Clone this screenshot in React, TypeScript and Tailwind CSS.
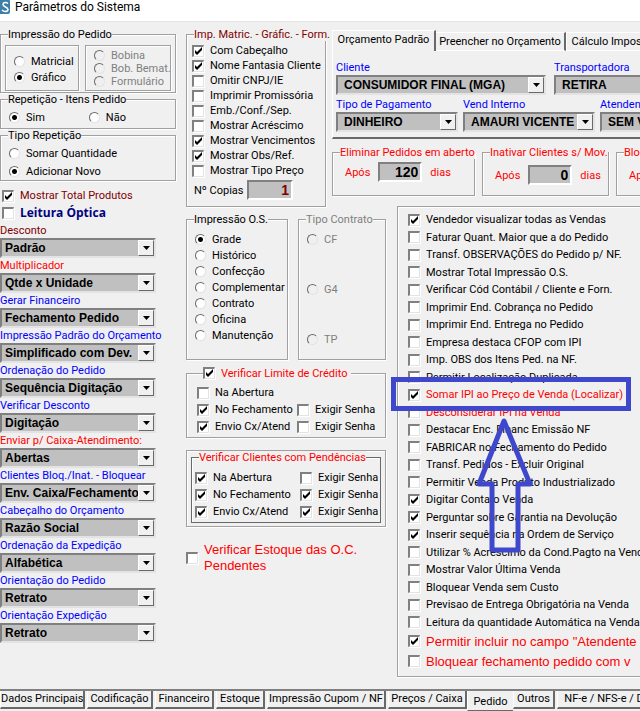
import type { ReactNode } from 'react';

const GROUP =
  'min-w-0 border border-[#a0a0a0] shadow-[1px_1px_0_#fff,inset_1px_1px_0_#fff]';

function Group({
  title,
  className = '',
  legendClass = '',
  children,
}: {
  title: ReactNode;
  className?: string;
  legendClass?: string;
  children: ReactNode;
}) {
  return (
    <fieldset className={`${GROUP} ${className}`}>
      <legend className={`ml-[7px] h-[13px] bg-[#f0f0f0] leading-[13px] ${legendClass}`}>{title}</legend>
      {children}
    </fieldset>
  );
}

function Check({
  label,
  checked = false,
  className = '',
}: {
  label: ReactNode;
  checked?: boolean;
  className?: string;
}) {
  return (
    <label className={`flex items-center gap-1.5 ${className}`}>
      <span className="grid shrink-0">
        <input
          type="checkbox"
          defaultChecked={checked}
          className="peer col-start-1 row-start-1 size-3 appearance-none border-t-2 border-r border-b border-l-2 border-t-[#808080] border-r-[#e3e3e3] border-b-[#e3e3e3] border-l-[#808080] bg-white shadow-[1px_1px_0_#fff]"
        />
        <svg
          viewBox="0 0 12 12"
          className="pointer-events-none col-start-1 row-start-1 hidden size-3 peer-checked:block"
          aria-hidden="true"
        >
          <path d="M3 5v3l2 2 5-5V2L5 7z" fill="#000" />
        </svg>
      </span>
      <span>{label}</span>
    </label>
  );
}

function Radio({
  label,
  name,
  checked = false,
  disabled = false,
  className = '',
}: {
  label: string;
  name: string;
  checked?: boolean;
  disabled?: boolean;
  className?: string;
}) {
  return (
    <label className={`flex items-center gap-1.5 ${disabled ? 'text-[#808080]' : ''} ${className}`}>
      <input
        type="radio"
        name={name}
        defaultChecked={checked}
        disabled={disabled}
        className="size-[11px] shrink-0 appearance-none rounded-full border border-t-[#696969] border-r-[#e3e3e3] border-b-[#e3e3e3] border-l-[#696969] bg-white checked:bg-[radial-gradient(circle,#000_0_2px,#fff_3px)] disabled:bg-[#f0f0f0]"
      />
      <span>{label}</span>
    </label>
  );
}

function Combo({
  label,
  value,
  color = 'text-[#0000ff]',
  className = '',
  inset = 'pl-[3px]',
}: {
  label: string;
  value: string;
  color?: string;
  className?: string;
  inset?: string;
}) {
  return (
    <label className={`block shrink-0 ${className}`}>
      <span className={`block h-[15px] leading-[15px] ${color}`}>{label}</span>
      <span className="relative block">
        <select
          className={`block h-5 w-full appearance-none overflow-hidden rounded-none border-2 border-t-[#808080] border-r-[#e3e3e3] border-b-[#e3e3e3] border-l-[#808080] bg-[#c0c0c0] pr-4 font-['Liberation_Sans',Arial,sans-serif] text-xs font-bold text-black ${inset}`}
        >
          <option>{value}</option>
        </select>
        <span className="pointer-events-none absolute top-[2px] right-[2px] flex h-4 w-4 items-center justify-center border border-t-white border-r-[#696969] border-b-[#696969] border-l-white bg-[#f0f0f0]">
          <svg viewBox="0 0 7 4" className="h-1 w-[7px]" aria-hidden="true">
            <path d="M0 0h7L3.5 4z" fill="#000" />
          </svg>
        </span>
      </span>
    </label>
  );
}

function NumberBox({ value, label, className = '' }: { value: string; label: string; className?: string }) {
  return (
    <input
      aria-label={label}
      defaultValue={value}
      className={`h-5 border-2 border-t-[#808080] border-r-white border-b-white border-l-[#808080] bg-[#c0c0c0] pr-[2px] text-right font-['Liberation_Sans',Arial,sans-serif] text-sm font-bold ${className}`}
    />
  );
}

const combos = [
  { label: 'Desconto', value: 'Padrão', color: 'text-[#800000]' },
  { label: 'Multiplicador', value: 'Qtde x Unidade', color: 'text-[#ff0000]' },
  { label: 'Gerar Financeiro', value: 'Fechamento Pedido' },
  { label: 'Impressão Padrão do Orçamento', value: 'Simplificado com Dev.' },
  { label: 'Ordenação do Pedido', value: 'Sequência Digitação' },
  { label: 'Verificar Desconto', value: 'Digitação' },
  { label: 'Enviar p/ Caixa-Atendimento:', value: 'Abertas', color: 'text-[#ff0000]' },
  { label: 'Clientes Bloq./Inat. - Bloquear', value: 'Env. Caixa/Fechamento' },
  { label: 'Cabeçalho do Orçamento', value: 'Razão Social' },
  { label: 'Ordenação da Expedição', value: 'Alfabética' },
  { label: 'Orientação do Pedido', value: 'Retrato' },
  { label: 'Orientação Expedição', value: 'Retrato' },
];

const printOptions: [string, boolean][] = [
  ['Com Cabeçalho', true],
  ['Nome Fantasia Cliente', true],
  ['Omitir CNPJ/IE', false],
  ['Imprimir Promissória', false],
  ['Emb./Conf./Sep.', false],
  ['Mostrar Acréscimo', false],
  ['Mostrar Vencimentos', true],
  ['Mostrar Obs/Ref.', true],
  ['Mostrar Tipo Preço', false],
];

const osLayouts = ['Grade', 'Histórico', 'Confecção', 'Complementar', 'Contrato', 'Oficina', 'Manutenção'];

const orderOptions: { label: string; checked?: boolean; red?: boolean }[] = [
  { label: 'Vendedor visualizar todas as Vendas', checked: true },
  { label: 'Faturar Quant. Maior que a do Pedido' },
  { label: 'Transf. OBSERVAÇÕES do Pedido p/ NF.' },
  { label: 'Mostrar Total Impressão O.S.' },
  { label: 'Verificar Cód Contábil / Cliente e Forn.' },
  { label: 'Imprimir End. Cobrança no Pedido' },
  { label: 'Imprimir End. Entrega no Pedido' },
  { label: 'Empresa destaca CFOP com IPI' },
  { label: 'Imp. OBS dos Itens Ped. na NF.' },
  { label: 'Permitir Localização Duplicada' },
  { label: 'Somar IPI ao Preço de Venda (Localizar)', checked: true, red: true },
  { label: 'Desconsiderar IPI na Venda', red: true },
  { label: 'Destacar Enc. Financ Emissão NF' },
  { label: 'FABRICAR no Fechamento do Pedido' },
  { label: 'Transf. Pedidos - Excluir Original' },
  { label: 'Permitir Venda Produto Industrializado' },
  { label: 'Digitar Contato Venda', checked: true },
  { label: 'Perguntar sobre Garantia na Devolução', checked: true },
  { label: 'Inserir sequência na Ordem de Serviço', checked: true },
  { label: 'Utilizar % Acrescimo da Cond.Pagto na Venda' },
  { label: 'Mostrar Valor Última Venda' },
  { label: 'Bloquear Venda sem Custo' },
  { label: 'Previsao de Entrega Obrigatória na Venda' },
  { label: 'Leitura da quantidade Automática na Venda' },
];

const TAB =
  'h-[18px] shrink-0 border-r-2 border-b-2 border-l border-r-[#696969] border-b-[#696969] border-l-white text-center leading-4';

function LeftColumn() {
  return (
    <div className="w-[176px] shrink-0">
      <Group title="Impressão do Pedido" className="h-[65px]">
        <div className="flex gap-1.5 px-1 pt-1">
          <div className={`flex h-[46px] w-[74px] flex-col justify-center pt-[3px] pl-2 ${GROUP}`}>
            <Radio name="impressao" label="Matricial" className="h-4" />
            <Radio name="impressao" label="Gráfico" checked className="h-4" />
          </div>
          <div className={`flex h-[46px] flex-1 flex-col justify-center pl-2 ${GROUP}`}>
            <Radio name="formato" label="Bobina" disabled className="h-[13px]" />
            <Radio name="formato" label="Bob. Bemat." disabled className="h-[13px]" />
            <Radio name="formato" label="Formulário" disabled className="h-[13px]" />
          </div>
        </div>
      </Group>
      <Group title="Repetição - Itens Pedido" className="h-9">
        <div className="flex h-[22px] items-center gap-[44px] pl-2">
          <Radio name="repeticao" label="Sim" checked />
          <Radio name="repeticao" label="Não" />
        </div>
      </Group>
      <Group title="Tipo Repetição" className="h-[52px]">
        <div className="pt-[2px] pl-2">
          <Radio name="tipo" label="Somar Quantidade" className="h-[18px]" />
          <Radio name="tipo" label="Adicionar Novo" checked className="h-[18px]" />
        </div>
      </Group>
      <div className="mt-1.5 pl-[2px]">
        <Check label="Mostrar Total Produtos" checked className="h-[17px] text-[#800000]" />
        <Check
          label="Leitura Óptica"
          className="h-[17px] font-['Open_Sans',sans-serif] text-xs font-bold text-[#000080]"
        />
      </div>
      <div className="mt-[2px] w-[156px]">
        {combos.map((c) => (
          <Combo key={c.label} {...c} />
        ))}
      </div>
    </div>
  );
}

function PrintGroup() {
  return (
    <Group
      title="Imp. Matric. - Gráfic. - Form."
      className="h-[179px] w-[140px] shrink-0"
      legendClass="text-[#800000]"
    >
      <div className="pt-[2px] pl-[5px]">
        {printOptions.map(([label, on]) => (
          <Check key={label} label={label} checked={on} className="h-[15px]" />
        ))}
        <div className="flex h-6 items-center justify-between pr-8 pl-[2px]">
          <span>Nº Copias</span>
          <NumberBox label="Nº Copias" value="1" className="w-[46px] text-[#800000]" />
        </div>
      </div>
    </Group>
  );
}

function DaysGroup({ title, value, className, rowClass }: { title: string; value: string; className: string; rowClass: string }) {
  return (
    <Group title={title} className={`h-[50px] shrink-0 text-[#ff0000] ${className}`}>
      <div className={`flex items-center gap-2 pl-3 ${rowClass}`}>
        <span>Após</span>
        <NumberBox label={title} value={value} className="w-11 text-black" />
        <span>dias</span>
      </div>
    </Group>
  );
}

function DefaultsArea() {
  return (
    <div className="min-w-0 flex-1 overflow-hidden pt-[2px]">
      <div className="flex items-end">
        <button className="h-[21px] w-[104px] shrink-0 border-t border-r-2 border-l border-t-white border-r-[#696969] border-l-white pb-1">
          Orçamento Padrão
        </button>
        <button className="h-[19px] w-[130px] shrink-0 border-t border-r-2 border-b border-t-white border-r-[#696969] border-b-white">
          Preencher no Orçamento
        </button>
        <button className="h-[19px] w-[90px] shrink-0 border-t border-b border-l border-t-white border-b-white border-l-white">
          Cálculo Imposto
        </button>
      </div>
      <div className="h-[88px] border-b-2 border-l border-b-[#696969] border-l-white pt-[9px] pl-[3px]">
        <div className="flex gap-2">
          <Combo label="Cliente" value="CONSUMIDOR FINAL (MGA)" className="w-[210px]" inset="pl-[6px]" />
          <Combo label="Transportadora" value="RETIRA" className="w-[210px]" inset="pl-[6px]" />
        </div>
        <div className="mt-[2px] flex gap-[5px]">
          <Combo label="Tipo de Pagamento" value="DINHEIRO" className="w-[122px]" inset="pl-[6px]" />
          <Combo label="Vend Interno" value="AMAURI VICENTE" className="w-[132px]" inset="pl-[6px]" />
          <Combo label="Atendente" value="SEM V" className="w-[132px]" inset="pl-[6px]" />
        </div>
      </div>
      <div className="mt-[7px] flex gap-[7px]">
        <DaysGroup title="Eliminar Pedidos em aberto" value="120" className="w-[143px]" rowClass="pt-[3px]" />
        <DaysGroup title="Inativar Clientes s/ Mov." value="0" className="w-[127px]" rowClass="pt-[6px]" />
        <DaysGroup title="Bloquear" value="0" className="w-[127px]" rowClass="pt-[6px]" />
      </div>
    </div>
  );
}

function MiddleColumn() {
  return (
    <div className="w-[200px] shrink-0 pt-[7px]">
      <div className="flex gap-2.5">
        <Group title="Impressão O.S." className="h-[147px] w-[102px]">
          <div className="pt-[5px] pl-2">
            {osLayouts.map((l, i) => (
              <Radio key={l} name="os" label={l} checked={i === 0} className="h-4" />
            ))}
          </div>
        </Group>
        <Group title="Tipo Contrato" className="h-[147px] flex-1" legendClass="text-[#808080]">
          <div className="flex h-[121px] flex-col justify-between pt-[5px] pl-2">
            <Radio name="contrato" label="CF" disabled className="h-4" />
            <Radio name="contrato" label="G4" disabled className="h-4" />
            <Radio name="contrato" label="TP" disabled className="h-4" />
          </div>
        </Group>
      </div>
      <fieldset className={`mt-1.5 h-[72px] ${GROUP}`}>
        <legend className="ml-4 bg-[#f0f0f0] pr-1">
          <Check label="Verificar Limite de Crédito" checked className="h-[14px] text-[#ff0000]" />
        </legend>
        <div className="grid grid-cols-[100px_1fr] pt-[4px] pl-2.5">
          <Check label="Na Abertura" className="col-span-2 h-[17px]" />
          <Check label="No Fechamento" checked className="h-[17px]" />
          <Check label="Exigir Senha" className="h-[17px]" />
          <Check label="Envio Cx/Atend" checked className="h-[17px]" />
          <Check label="Exigir Senha" className="h-[17px]" />
        </div>
      </fieldset>
      <div className={`mt-3 h-[77px] px-1 ${GROUP}`}>
        <fieldset className="h-[72px] border border-[#696969] shadow-[inset_1px_1px_0_#fff]">
          <legend className="ml-[7px] h-[13px] bg-[#f0f0f0] leading-[13px] text-[#ff0000]">
            Verificar Clientes com Pendências
          </legend>
          <div className="grid grid-cols-[105px_1fr] pt-[5px] pl-[3px]">
            <Check label="Na Abertura" checked className="h-[17px]" />
            <Check label="Exigir Senha" className="h-[17px]" />
            <Check label="No Fechamento" checked className="h-[17px]" />
            <Check label="Exigir Senha" checked className="h-[17px]" />
            <Check label="Envio Cx/Atend" checked className="h-[17px]" />
            <Check label="Exigir Senha" checked className="h-[17px]" />
          </div>
        </fieldset>
      </div>
      <Check
        className="mt-[15px] font-['Liberation_Sans',Arial,sans-serif] text-[13px] leading-4 text-[#ff0000]"
        label={
          <>
            Verificar Estoque das O.C.
            <br />
            Pendentes
          </>
        }
      />
    </div>
  );
}

function OrderOptions() {
  return (
    <div className="relative h-[471px] min-w-0 flex-1 border-t border-b border-l border-[#a0a0a0] pt-1 pl-2.5 shadow-[0_1px_0_#fff,inset_1px_1px_0_#fff]">
      <div>
        {orderOptions.map((o) => (
          <Check
            key={o.label}
            label={o.label}
            checked={o.checked}
            className={`odd:h-[17px] even:h-[18px] ${o.red ? 'text-[#ff0000]' : ''}`}
          />
        ))}
      </div>
      <div className="font-['Liberation_Sans',Arial,sans-serif] text-[13px] text-[#ff0000]">
        <Check label={'Permitir incluir no campo "Atendente'} checked className="h-5" />
        <Check label="Bloquear fechamento pedido com v" className="h-5" />
      </div>
      <svg
        viewBox="0 0 242 178"
        className="pointer-events-none absolute top-[170px] -left-[7px] h-[178px] w-[242px]"
        fill="none"
        stroke="#3f48cc"
        aria-hidden="true"
      >
        <rect x="2.500" y="2.500" width="235" height="29" strokeWidth="5" />
        <path d="M113 44L88 107h13v66h26v-66h12z" strokeWidth="5" strokeLinejoin="round" />
      </svg>
    </div>
  );
}

function BottomTabs() {
  return (
    <nav className="mt-3 flex items-start overflow-hidden border-t-2 border-[#808080]">
      <button className={`${TAB} w-[85px]`}>Dados Principais</button>
      <button className={`${TAB} ml-[2px] w-[66px]`}>Codificação</button>
      <button className={`${TAB} ml-[2px] w-[59px]`}>Financeiro</button>
      <button className={`${TAB} ml-[2px] w-[49px]`}>Estoque</button>
      <button className={`${TAB} ml-[2px] w-[119px]`}>Impressão Cupom / NF</button>
      <button className={`${TAB} ml-[2px] w-[79px]`}>Preços / Caixa</button>
      <button className="-mt-[2px] h-[22px] w-[46px] shrink-0 border-b border-l border-b-[#696969] border-l-white bg-[#f0f0f0] pt-1">
        Pedido
      </button>
      <button className={`${TAB} w-[42px]`}>Outros</button>
      <button className={`${TAB} ml-[2px] w-[110px]`}>NF-e / NFS-e / DF-e</button>
    </nav>
  );
}

export default function App() {
  return (
    <div className="overflow-hidden bg-[#f0f0f0] font-[Roboto,sans-serif] text-[11px] leading-[13px] whitespace-nowrap text-black">
      <header className="flex h-[22px] items-start gap-[5px] border-b border-[#e3e3e3] bg-white">
        <svg viewBox="0 0 10 14" className="h-[14px] w-2.5" aria-hidden="true">
          <path d="M0 0h9a1 1 0 0 1 1 1v11a2 2 0 0 1-2 2H0z" fill="#3c7fa8" />
          <path d="M8 3.5C6.500 2 3 2 3 4.500S8 7 8 9.500 4 12 2 10" fill="none" stroke="#fff" strokeWidth="1.500" />
        </svg>
        <h1 className="text-xs leading-[14px]">Parâmetros do Sistema</h1>
      </header>
      <main className="flex gap-2.5 pt-1.5">
        <LeftColumn />
        <div className="min-w-0 flex-1">
          <div className="flex h-[178px] gap-1.5">
            <PrintGroup />
            <DefaultsArea />
          </div>
          <div className="flex gap-[11px]">
            <MiddleColumn />
            <OrderOptions />
          </div>
        </div>
      </main>
      <BottomTabs />
    </div>
  );
}
